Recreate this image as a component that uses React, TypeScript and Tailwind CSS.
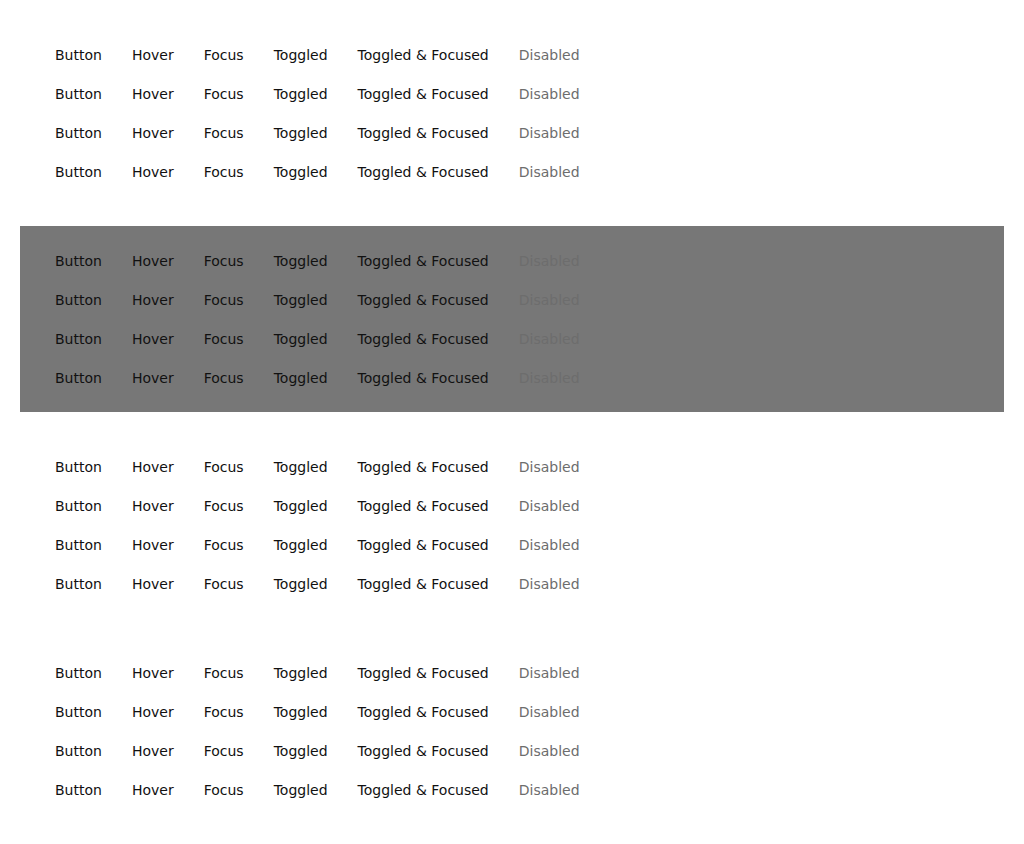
const labels = ["Button", "Hover", "Focus", "Toggled", "Toggled & Focused"];

function ButtonRow() {
  return (
    <div className="flex h-[39px] items-center">
      {labels.map((label) => (
        <button key={label} className="px-[15px] h-[39px] text-[14px] text-[#111]">
          {label}
        </button>
      ))}
      <button disabled className="px-[15px] h-[39px] text-[14px] text-[#6d6d6d]">
        Disabled
      </button>
    </div>
  );
}

function Section({ dark = false }: { dark?: boolean }) {
  return (
    <div className={`px-[20px] py-[15px] ${dark ? "bg-[#777777]" : "bg-white"}`}>
      <ButtonRow />
      <ButtonRow />
      <ButtonRow />
      <ButtonRow />
    </div>
  );
}

export default function App() {
  return (
    <div
      className="min-h-[844px] bg-white p-[20px] flex flex-col gap-[20px] leading-none"
      style={{ fontFamily: '"DejaVu Sans", sans-serif' }}
    >
      <Section />
      <Section dark />
      <Section />
      <Section />
    </div>
  );
}
